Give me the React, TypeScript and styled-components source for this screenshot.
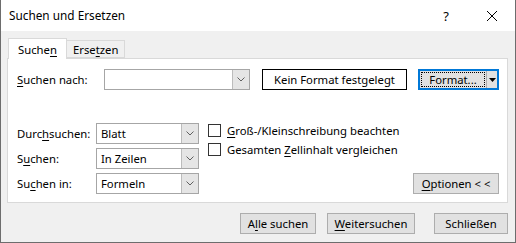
import React from "react";
import styled, { createGlobalStyle } from "styled-components";

const GlobalStyle = createGlobalStyle`
  html, body {
    margin: 0;
    padding: 0;
    background: #ffffff;
  }
  body {
    font-family: "Noto Sans", "Open Sans", sans-serif;
    font-size: 11.3px;
    color: #000000;
  }
`;

// Fenster mit Titelleiste und grauem Inhalt
const Window = styled.div`
  width: 516px;
  height: 243px;
  box-sizing: border-box;
  display: flex;
  flex-direction: column;
  background: #f0f0f0;
  border: 1px solid #6d6d6d;
  border-top: none;
`;

const TitleBar = styled.div`
  height: 31px;
  flex-shrink: 0;
  display: flex;
  align-items: center;
  background: #ffffff;
  padding-left: 8px;
`;

const Title = styled.span`
  flex: 1;
  font-size: 11.8px;
  padding-bottom: 1px;
`;

const TitleButton = styled.div`
  width: 46px;
  height: 31px;
  display: flex;
  align-items: center;
  justify-content: center;
  font-size: 13px;
`;

const Body = styled.div`
  flex: 1;
  display: flex;
  flex-direction: column;
  padding: 7px 7px 0 6px;
`;

// Registerkarten
const TabStrip = styled.div`
  display: flex;
  align-items: flex-end;
  height: 20px;
  padding-left: 1px;
`;

const Tab = styled.div<{ $active?: boolean }>`
  position: relative;
  z-index: ${(p) => (p.$active ? 2 : 1)};
  box-sizing: border-box;
  height: ${(p) => (p.$active ? "21px" : "18px")};
  margin-bottom: ${(p) => (p.$active ? "-1px" : "0")};
  padding: 0 ${(p) => (p.$active ? "9px" : "6px")};
  display: flex;
  align-items: center;
  background: ${(p) => (p.$active ? "#ffffff" : "#f0f0f0")};
  border: 1px solid #d9d9d9;
  border-bottom: ${(p) => (p.$active ? "none" : "1px solid #d9d9d9")};
  margin-left: ${(p) => (p.$active ? "0" : "-1px")};
`;

const Panel = styled.div`
  box-sizing: border-box;
  height: 145px;
  background: #ffffff;
  border: 1px solid #d9d9d9;
  padding: 10px 8px 9px 9px;
  display: flex;
  flex-direction: column;
`;

const SearchRow = styled.div`
  display: flex;
  align-items: center;
  height: 21px;
`;

const Label = styled.span<{ $width: number }>`
  width: ${(p) => p.$width}px;
  flex-shrink: 0;
  white-space: nowrap;
`;

const Key = styled.span`
  text-decoration: underline;
  text-underline-offset: 2px;
`;

// Kombinationsfeld mit grauem Pfeilknopf
const Combo = styled.div<{ $width: number }>`
  box-sizing: border-box;
  width: ${(p) => p.$width}px;
  height: 21px;
  display: flex;
  border: 1px solid #a6a6a6;
  background: #ffffff;
`;

const ComboText = styled.div`
  flex: 1;
  padding-left: 4px;
  display: flex;
  align-items: center;
`;

const ComboArrow = styled.div`
  width: 16px;
  display: flex;
  align-items: center;
  justify-content: center;
  background: #e5e5e5;
  border-left: 1px solid #bcbcbc;
`;

const BoxButton = styled.div<{ $width: number }>`
  box-sizing: border-box;
  width: ${(p) => p.$width}px;
  height: 21px;
  margin-left: 12px;
  display: flex;
  align-items: center;
  justify-content: center;
  background: #ffffff;
  border: 1px solid #000000;
`;

const FormatButton = styled.div`
  box-sizing: border-box;
  width: 81px;
  height: 21px;
  margin-left: 11px;
  display: flex;
  background: #e1e1e1;
  border: 2px solid #0078d7;
`;

const FocusLabel = styled.div`
  flex: 1;
  margin: 1px;
  display: flex;
  align-items: center;
  justify-content: center;
  border: 1px dotted #000000;
`;

const SplitArrow = styled.div`
  width: 10px;
  display: flex;
  align-items: center;
  justify-content: center;
  border-left: 1px solid #adadad;
`;

const LowerSection = styled.div`
  flex: 1;
  display: flex;
  margin-top: 33px;
`;

const FieldGrid = styled.div`
  display: grid;
  grid-template-columns: 79px 103px;
  grid-auto-rows: 21px;
  row-gap: 4px;
  align-items: center;
`;

const Checks = styled.div`
  flex: 1;
  display: flex;
  flex-direction: column;
  gap: 6px;
  margin-left: 9px;
  padding-top: 1px;
`;

const CheckRow = styled.label`
  display: flex;
  align-items: center;
  gap: 6px;
  height: 13px;
`;

const CheckBox = styled.span`
  box-sizing: border-box;
  width: 13px;
  height: 13px;
  border: 1px solid #333333;
  background: #ffffff;
`;

const Button = styled.div<{ $width: number; $push?: number }>`
  box-sizing: border-box;
  width: ${(p) => p.$width}px;
  height: 21px;
  margin-left: ${(p) => p.$push ?? 0}px;
  display: flex;
  align-items: center;
  justify-content: center;
  background: #e1e1e1;
  border: 1px solid #adadad;
`;

const OptionsWrap = styled.div`
  display: flex;
  align-items: flex-end;
`;

const Footer = styled.div`
  display: flex;
  justify-content: flex-end;
  gap: 11px;
  padding-top: 10px;
`;

const Chevron = () => (
  <svg width="8" height="5" viewBox="0 0 8 5">
    <path d="M0.5 0.5 L4 4 L7.5 0.5" fill="none" stroke="#606060" strokeWidth="1" />
  </svg>
);

const CloseIcon = () => (
  <svg width="10" height="10" viewBox="0 0 10 10">
    <path d="M0 0 L10 10 M10 0 L0 10" stroke="#000" strokeWidth="1" />
  </svg>
);

const fields = [
  { pre: "Durc", key: "h", post: "suchen:", value: "Blatt" },
  { pre: "S", key: "u", post: "chen:", value: "In Zeilen" },
  { pre: "Su", key: "c", post: "hen in:", value: "Formeln" },
];

export default function App() {
  return (
    <>
      <GlobalStyle />
      <Window>
        <TitleBar>
          <Title>Suchen und Ersetzen</Title>
          <TitleButton>?</TitleButton>
          <TitleButton>
            <CloseIcon />
          </TitleButton>
        </TitleBar>
        <Body>
          <TabStrip>
            <Tab $active>
              Suche<Key>n</Key>
            </Tab>
            <Tab>
              Erse<Key>t</Key>zen
            </Tab>
          </TabStrip>
          <Panel>
            <SearchRow>
              <Label $width={87}>
                <Key>S</Key>uchen nach:
              </Label>
              <Combo $width={146}>
                <ComboText />
                <ComboArrow>
                  <Chevron />
                </ComboArrow>
              </Combo>
              <BoxButton $width={145}>Kein Format festgelegt</BoxButton>
              <FormatButton>
                <FocusLabel>Format...</FocusLabel>
                <SplitArrow>
                  <svg width="7" height="4" viewBox="0 0 7 4">
                    <path d="M0 0 L7 0 L3.5 4 Z" fill="#000" />
                  </svg>
                </SplitArrow>
              </FormatButton>
            </SearchRow>
            <LowerSection>
              <FieldGrid>
                {fields.map((f) => (
                  <React.Fragment key={f.value}>
                    <Label $width={79}>
                      {f.pre}
                      <Key>{f.key}</Key>
                      {f.post}
                    </Label>
                    <Combo $width={103}>
                      <ComboText>{f.value}</ComboText>
                      <ComboArrow>
                        <Chevron />
                      </ComboArrow>
                    </Combo>
                  </React.Fragment>
                ))}
              </FieldGrid>
              <Checks>
                <CheckRow>
                  <CheckBox />
                  <span>
                    <Key>G</Key>roß-/Kleinschreibung beachten
                  </span>
                </CheckRow>
                <CheckRow>
                  <CheckBox />
                  <span>
                    Gesamten <Key>Z</Key>ellinhalt vergleichen
                  </span>
                </CheckRow>
              </Checks>
              <OptionsWrap>
                <Button $width={86}>
                  <span>
                    <Key>O</Key>ptionen &lt; &lt;
                  </span>
                </Button>
              </OptionsWrap>
            </LowerSection>
          </Panel>
          <Footer>
            <Button $width={76}>
              <span>
                A<Key>l</Key>le suchen
              </span>
            </Button>
            <Button $width={88}>
              <span>
                <Key>W</Key>eitersuchen
              </span>
            </Button>
            <Button $width={74} $push={8}>
              Schließen
            </Button>
          </Footer>
        </Body>
      </Window>
    </>
  );
}
